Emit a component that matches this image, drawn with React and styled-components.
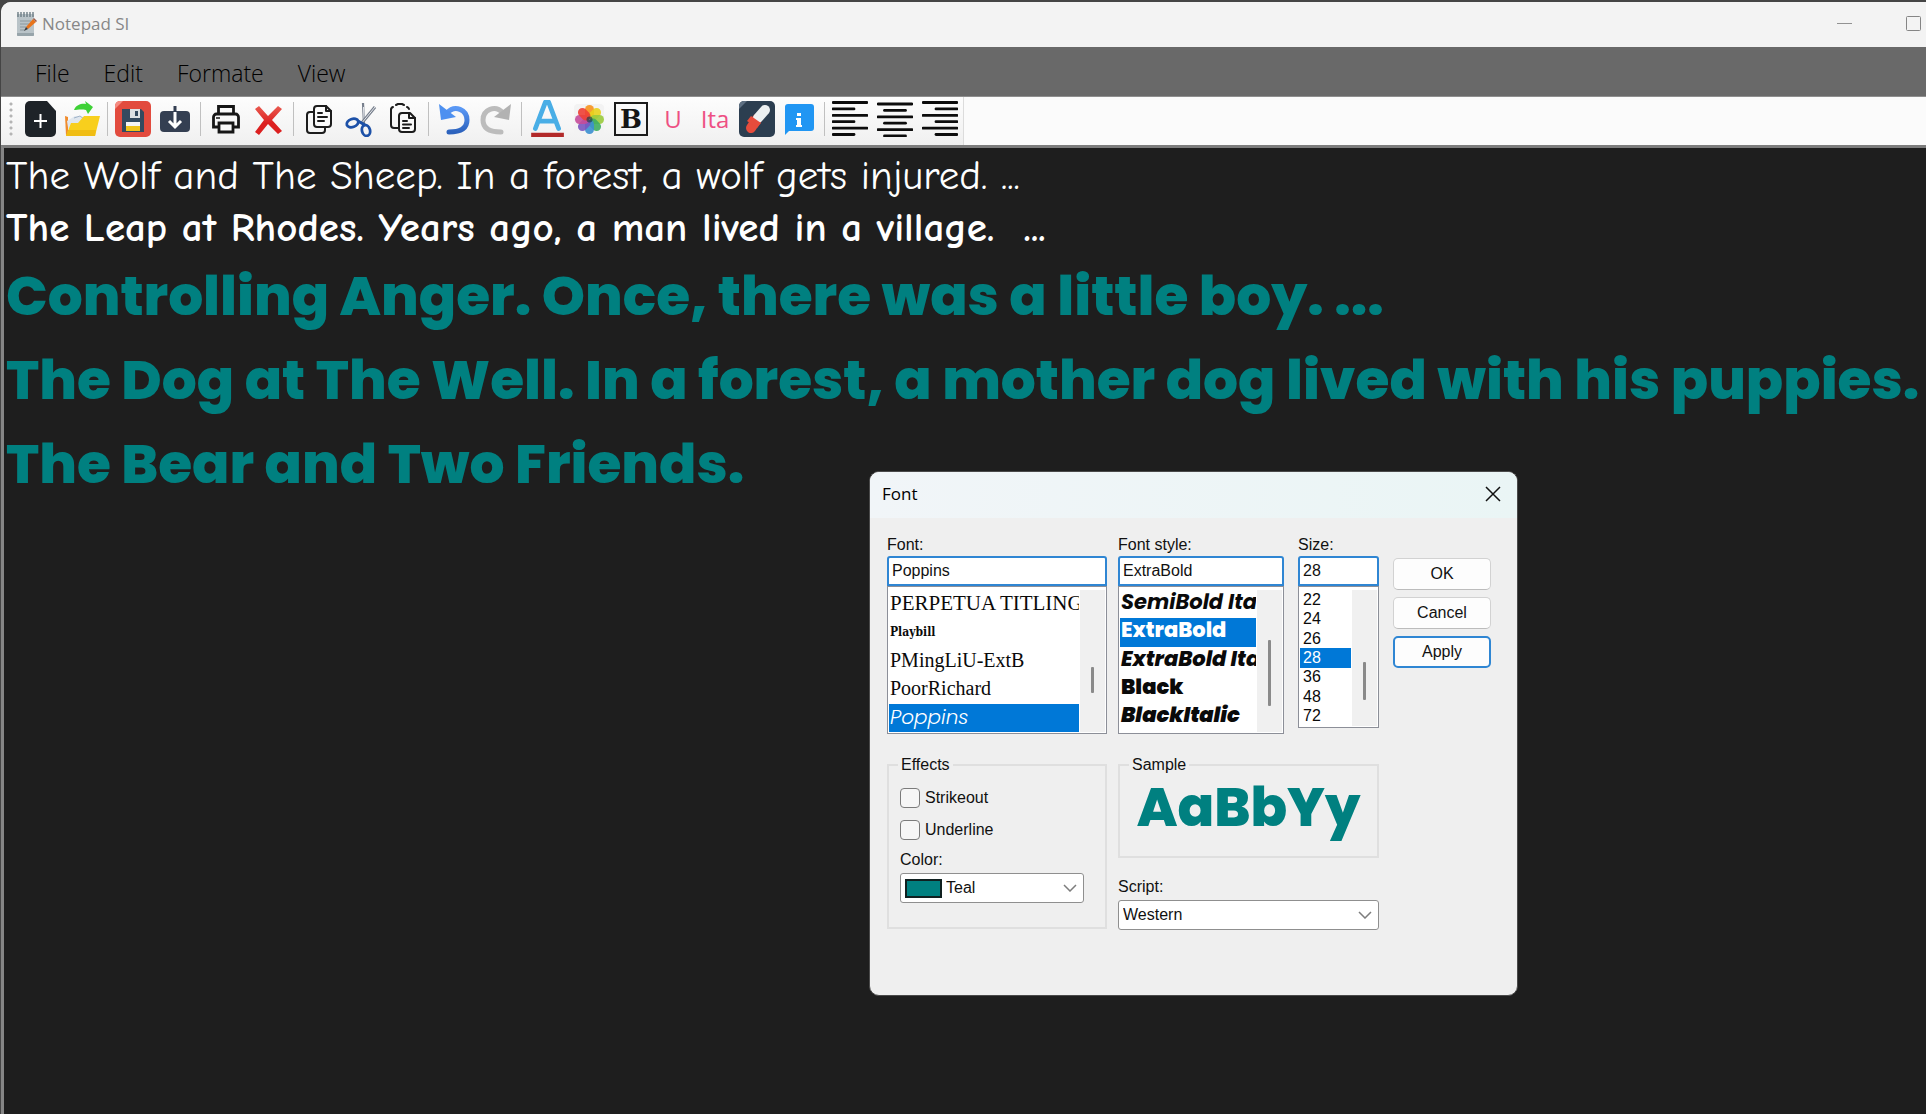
import React from "react";
import styled, { createGlobalStyle } from "styled-components";

const UI = `"Liberation Sans", Arial, sans-serif`;
const SYSTEM = `"Segoe UI", "Open Sans", "Noto Sans", sans-serif`;
const COMIC = `"Comic Sans MS", "Comic Neue", "Comic Relief", "Noto Sans", sans-serif`;
const POPPINS = `Poppins, Inter, sans-serif`;
const TEAL = "#008080";

const GlobalStyle = createGlobalStyle`
  *, *::before, *::after { box-sizing: border-box; }
  html { background: #454545; }
  body { margin: 0; font-family: ${UI}; overflow: hidden; }
  button, input, select { font: inherit; color: inherit; }
`;

/* ---------- main window ---------- */

const Desktop = styled.div`
  min-height: 100vh;
  display: flex;
  padding: 2px 0 0 1px;
  background: #454545;
`;

const Window = styled.main`
  flex: 1;
  min-width: 0;
  display: flex;
  flex-direction: column;
  border-top-left-radius: 10px;
  overflow: hidden;
  background: #f3f3f3;
`;

const TitleBar = styled.header`
  height: 45px;
  display: flex;
  align-items: center;
  gap: 5px;
  padding: 0 5px 2px 15px;
  background: #f3f3f3;
`;

const AppName = styled.h1`
  flex: 1;
  margin: 0;
  font: 400 17px/24px ${SYSTEM};
  color: #878787;
`;

const CaptionButtons = styled.div`
  display: flex;
  gap: 54px;
`;

const PlainButton = styled.button`
  display: flex;
  padding: 0;
  border: 0;
  background: none;
`;

const MenuBar = styled.nav`
  height: 50px;
  display: flex;
  align-items: center;
  gap: 34px;
  padding: 3px 34px 0;
  background: #696969;
  border-bottom: 1px solid #8e8e8e;
`;

const MenuItem = styled.button`
  padding: 0;
  border: 0;
  background: none;
  font: 300 23px/30px ${SYSTEM};
  color: #000;
`;

const ToolArea = styled.div`
  display: flex;
  height: 48px;
  background: #fbfbfb;
`;

const ToolBar = styled.div`
  display: flex;
  align-items: center;
  padding: 0 2px 5px 8px;
  background: linear-gradient(#fdfdfd, #f0f0f0);
  border-right: 1px solid #dcdcdc;
`;

const Grip = styled.span`
  width: 4px;
  height: 36px;
  margin-right: 6px;
  background: radial-gradient(circle, #b4b4b4 1px, transparent 2px) 0 0 / 4px 6px;
`;

const Divider = styled.span`
  width: 1px;
  height: 34px;
  margin: 0 4px;
  background: #c0c0c0;
`;

const Tool = styled.button`
  width: 42px;
  height: 42px;
  display: grid;
  place-items: center;
  padding: 0;
  border: 0;
  background: none;
`;

const AlignGroup = styled.div`
  display: flex;
  gap: 3px;
`;

const ToolText = styled.span`
  font: 400 24px/30px ${SYSTEM};
  color: #ee4f83;
`;

const Editor = styled.section`
  flex: 1;
  border-top: 3px solid #7d7d7d;
  border-left: 3px solid #868686;
  padding: 2px 0 0 2px;
  background: #1e1e1e;
  overflow: hidden;
`;

const Line = styled.p`
  margin: 0;
  white-space: pre;
  font-family: ${(p) => p.$family};
  font-size: ${(p) => p.$size}px;
  font-weight: ${(p) => p.$weight};
  line-height: ${(p) => p.$height}px;
  color: ${(p) => p.$color};
`;

/* ---------- font dialog ---------- */

const Dialog = styled.section`
  position: absolute;
  top: 471px;
  left: 869px;
  width: 649px;
  height: 525px;
  border: 1px solid #4a4a4a;
  border-radius: 10px;
  overflow: hidden;
  background: #efefef;
  color: #111;
  font-size: 16px;
  line-height: 20px;
`;

const DialogTitle = styled.header`
  height: 46px;
  display: flex;
  align-items: center;
  justify-content: space-between;
  padding: 0 16px 2px 12px;
  background: linear-gradient(90deg, #f1f5f8, #eaf5f5);
`;

const DialogName = styled.h2`
  margin: 0;
  font: 400 17px/24px ${SYSTEM};
  color: #000;
`;

const DialogBody = styled.div`
  display: grid;
  grid-template-columns: 220px 166px 84px 101px;
  column-gap: 11px;
  padding: 16px 17px;
`;

const Picker = styled.div`
  display: flex;
  flex-direction: column;
  padding-left: ${(p) => p.$inset || 0}px;
`;

const FieldLabel = styled.label`
  height: ${(p) => p.$height || 22}px;
  padding-top: 1px;
`;

const TextBox = styled.input`
  width: 100%;
  height: 30px;
  padding: 0 3px;
  border: 2px solid #2f86d3;
  border-radius: 3px 3px 0 0;
  background: #fff;
  outline: 0;
`;

const ListFrame = styled.div`
  height: ${(p) => p.$height}px;
  display: flex;
  gap: 1px;
  padding: 3px 1px 1px;
  border: 1px solid #8c8f98;
  background: #fff;
`;

const List = styled.ul`
  flex: 1;
  min-width: 0;
  display: flex;
  flex-direction: column;
  margin: 0;
  padding: 0;
  list-style: none;
  overflow: hidden;
`;

const Option = styled.li`
  flex: 1;
  min-height: 0;
  display: flex;
  align-items: center;
  padding: 0 0 ${(p) => p.$lift || 0}px ${(p) => p.$indent || 1}px;
  white-space: nowrap;
  overflow: hidden;
  font-family: ${(p) => p.$family || UI};
  font-size: ${(p) => p.$size || 16}px;
  font-weight: ${(p) => p.$weight || 400};
  font-style: ${(p) => (p.$italic ? "italic" : "normal")};
  color: ${(p) => (p["aria-selected"] ? "#fff" : "#0a0a0a")};
  background: ${(p) => (p["aria-selected"] ? "#0078d7" : "transparent")};
`;

const Scroll = styled.div`
  width: 25px;
  padding: ${(p) => p.$top}px 0 0 11px;
  background: #f0f0f0;

  &::before {
    content: "";
    display: block;
    width: 3px;
    height: ${(p) => p.$thumb}px;
    border-radius: 1px;
    background: #8a8a8a;
  }
`;

const Actions = styled.div`
  display: flex;
  flex-direction: column;
  gap: 7px;
  padding: 24px 0 0 3px;
`;

const Action = styled.button`
  height: 32px;
  padding: 0;
  border: ${(p) => (p.$primary ? "2px solid #2f86d3" : "1px solid #d2d2d2")};
  border-bottom-color: ${(p) => (p.$primary ? "#2f86d3" : "#bcbcbc")};
  border-radius: 5px;
  background: #fdfdfd;
`;

const LowerGrid = styled.div`
  display: grid;
  grid-template-columns: 220px 261px;
  column-gap: 11px;
  padding: 5px 17px;
`;

const Group = styled.fieldset`
  height: ${(p) => p.$height}px;
  min-width: 0;
  margin: 0;
  padding: 0 11px;
  border: 2px solid #dfdfdf;
`;

const Legend = styled.legend`
  height: 20px;
  padding: 0 3px;
  margin-left: -2px;
`;

const Check = styled.label`
  display: flex;
  align-items: center;
  gap: 5px;
  height: 32px;

  input {
    appearance: none;
    width: 20px;
    height: 20px;
    margin: 0;
    border: 1px solid #7b7b7b;
    border-radius: 4px;
    background: #f6f6f6;
  }
`;

const EffectRows = styled.div`
  display: grid;
  padding-top: 7px;
`;

const ColorField = styled(Picker)`
  padding-top: 3px;
`;

const SelectBox = styled.div`
  width: ${(p) => p.$width};
  height: 30px;
  display: flex;
  align-items: center;
  gap: 4px;
  padding: 0 6px 0 4px;
  border: 1px solid #8f8f8f;
  border-radius: 3px;
  background: #fff;

  select {
    flex: 1;
    min-width: 0;
    padding: 0;
    border: 0;
    appearance: none;
    background: none;
    outline: 0;
  }
`;

const Swatch = styled.span`
  width: 37px;
  height: 19px;
  border: 2px solid #102020;
  background: ${TEAL};
`;

const Sample = styled.div`
  padding-top: 4px;
  text-align: center;
  white-space: nowrap;
  font: 800 54px/56px ${POPPINS};
  color: ${TEAL};
`;

const ScriptField = styled.div`
  display: flex;
  flex-direction: column;
  padding-top: 18px;
`;

/* ---------- drawings ---------- */

const Icon = ({ children, size = 36 }) => (
  <svg width={size} height={size} viewBox="0 0 36 36" fill="none" aria-hidden="true">
    {children}
  </svg>
);

const NotepadIcon = () => (
  <svg width="21" height="26" viewBox="0 0 21 26" aria-hidden="true">
    <rect x="1" y="3" width="17" height="22" rx="1" fill="#b9c3c8" />
    <path d="M1 22h17v2a1 1 0 0 1-1 1H2a1 1 0 0 1-1-1z" fill="#97a4aa" />
    <path d="M2 1v5M5 1v5M8 1v5M11 1v5M14 1v5M17 1v5" stroke="#6c7b83" strokeWidth="1.4" />
    <path d="M4 10h11M4 13h9M4 16h6M4 19h5" stroke="#8b989e" />
    <path d="M10 16l7-8 3 3-8 7z" fill="#e8741c" />
    <path d="M17 8l1-1 3 3-1 1z" fill="#9b5a4a" />
    <path d="M10 16l2 2-4 2z" fill="#3a3a3a" />
  </svg>
);

const NewIcon = () => (
  <Icon>
    <path d="M8 0h17l9 10v21a5 5 0 0 1-5 5H8a5 5 0 0 1-5-5V5a5 5 0 0 1 5-5z" fill="#1e2328" />
    <path d="M18.500 13v14M12 20h13" stroke="#fff" strokeWidth="2" />
  </Icon>
);

const OpenIcon = () => (
  <Icon>
    <path d="M1 15l3 1v18H2z" fill="#f08b2c" />
    <path d="M3 20l8-5 8 1 6 3-4 8-16 6z" fill="#dfe6ee" />
    <path d="M10 17l6-2 4 3" stroke="#9fb2c8" />
    <path d="M7 22h7l6-7h16l-5 20H2z" fill="#f8cf1d" />
    <path d="M4 29L2 35h29l1-6z" fill="#f0bd14" />
    <path d="M10 9c2-6 9-7 12-6l-1-3 8 6-5 7-2-4c-5-1-9 0-12 0z" fill="#3ed136" />
  </Icon>
);

const SaveIcon = () => (
  <Icon>
    <rect width="36" height="36" rx="5" fill="#e24b3e" />
    <path d="M0 8L8 0H5a5 5 0 0 0-5 5z" fill="#f58c82" />
    <path d="M7 8h19l3 3v20H7z" fill="#334a5f" />
    <path d="M15 8h10v9H15z" fill="#dce1e4" />
    <path d="M20 10h3v5h-3z" fill="#334a5f" />
    <path d="M11 21h14v9H11z" fill="#f4f4f4" />
    <path d="M11 25h14v5H11z" fill="#f0c419" />
  </Icon>
);

const DownloadIcon = () => (
  <Icon>
    <rect x="3" y="10" width="30" height="21" rx="4" fill="#343f52" />
    <path d="M16.500 5h3v6h-3z" fill="#343f52" />
    <path d="M18 11v14M12 20l6 6 6-6" stroke="#fff" strokeWidth="3" />
  </Icon>
);

const PrinterIcon = () => (
  <Icon>
    <g stroke="#161616" strokeWidth="2.800" strokeLinejoin="miter">
      <path d="M10.500 13V5.500h15V13" />
      <path d="M11 26H5.500V16a3 3 0 0 1 3-3h19a3 3 0 0 1 3 3v10H25" />
      <path d="M11 22h14v9H11z" fill="#fafafa" />
    </g>
    <path d="M8 17h4" stroke="#161616" strokeWidth="1.500" />
  </Icon>
);

const DeleteIcon = () => (
  <Icon>
    <defs>
      <linearGradient id="cross" x1="0" y1="0" x2="0" y2="1">
        <stop stopColor="#ea5a50" />
        <stop offset="0.600" stopColor="#dc2020" />
      </linearGradient>
    </defs>
    <path d="M5 8l4-3 9 10L28 5l4 3-10 11 10 11-4 3-10-10-9 11-4-3 9-12z" fill="url(#cross)" />
  </Icon>
);

const CopyIcon = () => (
  <Icon>
    <g stroke="#1c1c1c" strokeWidth="2" strokeLinejoin="round" strokeLinecap="round">
      <path d="M12 11H9a3 3 0 0 0-3 3v15a3 3 0 0 0 3 3h12a3 3 0 0 0 3-3v-3" />
      <path d="M16 5h9l5 5v13a3 3 0 0 1-3 3H16a3 3 0 0 1-3-3V8a3 3 0 0 1 3-3z" fill="#fafafa" />
      <path d="M25 5v5h5M17 12h4M17 16h9M17 20h6" />
    </g>
  </Icon>
);

const CutIcon = () => (
  <Icon>
    <path d="M20 2l1 21" stroke="#777f8c" strokeWidth="2.200" />
    <path d="M20.500 6l.5 12" stroke="#e7e9ee" />
    <path d="M32 6L18 23" stroke="#777f8c" strokeWidth="3" />
    <path d="M32 6L18 23" stroke="#e7e9ee" />
    <ellipse cx="9.500" cy="22" rx="6" ry="4" transform="rotate(-20 9.500 22)" stroke="#1d51a8" strokeWidth="2.800" />
    <ellipse cx="23" cy="29.500" rx="4" ry="5.500" transform="rotate(-15 23 29.500)" stroke="#1d51a8" strokeWidth="2.800" />
    <path d="M15 20l7 4" stroke="#1d51a8" strokeWidth="3" />
  </Icon>
);

const PasteIcon = () => (
  <Icon>
    <g stroke="#1c1c1c" strokeWidth="2" strokeLinejoin="round" strokeLinecap="round">
      <path d="M13 27H9a3 3 0 0 1-3-3V9a3 3 0 0 1 2-3" />
      <path d="M11 4l2-1h4l2 1M22 6a3 3 0 0 1 2 2" />
      <path d="M17 12h8l5 5v11a3 3 0 0 1-3 3H17a3 3 0 0 1-3-3V15a3 3 0 0 1 3-3z" fill="#fafafa" />
      <path d="M24 12v5h6M18 20h4M18 23.500h8M18 27h6" />
    </g>
  </Icon>
);

const UndoIcon = () => (
  <Icon>
    <defs>
      <linearGradient id="undo" x1="0" y1="0" x2="0" y2="1">
        <stop stopColor="#5a98f5" />
        <stop offset="1" stopColor="#2c62bd" />
      </linearGradient>
    </defs>
    <path d="M11 12c8-9 20-3 20 7 0 8-6 12-18 12" stroke="url(#undo)" strokeWidth="5" strokeLinecap="round" />
    <path d="M3 3l2 16 15-3z" fill="#4d90f0" />
  </Icon>
);

const RedoIcon = () => (
  <Icon>
    <path d="M25 12C17 3 5 9 5 19c0 8 6 12 18 12" stroke="#bcbcbc" strokeWidth="5" strokeLinecap="round" />
    <path d="M33 3l-2 16-15-3z" fill="#b2b2b2" />
  </Icon>
);

const ColorIcon = () => (
  <Icon size={38}>
    <path d="M7 27L16.500 2h3L29 27M11 20h14" stroke="#49aee6" strokeWidth="4.500" strokeLinejoin="round" strokeLinecap="round" />
    <path d="M3 31h31v4H3z" fill="#b22a2a" />
  </Icon>
);

const PETALS = ["#f7941d", "#e8d21d", "#9acb3c", "#3fae62", "#3b8fd0", "#7a55c0", "#c54b9a", "#ee4035"];

const FlowerIcon = () => (
  <Icon>
    <rect x="3" y="3" width="30" height="31" rx="4" fill="#f3f3f3" />
    {PETALS.map((color, i) => (
      <rect
        key={color}
        x="14"
        y="4"
        width="9"
        height="14"
        rx="4.500"
        fill={color}
        opacity="0.900"
        transform={`rotate(${i * 45} 18.500 18.500)`}
      />
    ))}
    <circle cx="18.500" cy="18.500" r="3" fill="#23404a" opacity="0.700" />
  </Icon>
);

const BoldFrame = styled.span`
  width: 34px;
  height: 34px;
  display: grid;
  place-items: center;
  border: 2px solid #1b1b1b;
  font: 700 26px/30px "DejaVu Serif", "Liberation Serif", serif;
  color: #151515;
`;

const PillIcon = () => (
  <Icon>
    <rect width="36" height="36" rx="5" fill="#2c3e50" />
    <path d="M0 8L8 0H5a5 5 0 0 0-5 5z" fill="#5d6f82" />
    <path d="M12 27L18 18" stroke="#e74c3c" strokeWidth="10" strokeLinecap="round" />
    <path d="M19 17l7-8" stroke="#ecf0f1" strokeWidth="10" strokeLinecap="round" />
    <path d="M12 15l10 7-4 5-10-7z" fill="#e74c3c" />
  </Icon>
);

const InfoIcon = () => (
  <Icon>
    <path d="M6 3h24a3 3 0 0 1 3 3v21a3 3 0 0 1-3 3H8l-4 4V6a3 3 0 0 1 3-3z" fill="#2196f3" />
    <path d="M16 12h4v3h-4zM15 17h5v7h1v2h-6v-2h1v-5h-1z" fill="#fff" />
  </Icon>
);

const AlignIcon = ({ mode }) => (
  <Icon>
    {[0, 1, 2, 3, 4, 5].map((i) => {
      const width = i % 2 ? 21 : 34;
      const x = mode === "left" ? 1 : mode === "right" ? 35 - width : 18 - width / 2;
      const y = (mode === "center" ? 3 : 1.5) + i * 6.4;
      return <path key={i} d={`M${x} ${y}h${width}`} stroke="#0d0d0d" strokeWidth="2.800" strokeLinecap="round" />;
    })}
  </Icon>
);

const Chevron = () => (
  <svg width="14" height="8" viewBox="0 0 14 8" fill="none" aria-hidden="true">
    <path d="M1 1l6 6 6-6" stroke="#7d7d7d" strokeWidth="1.500" />
  </svg>
);

/* ---------- data ---------- */

const WRITING = [
  { text: "The Wolf and The Sheep. In a forest, a wolf gets injured. ...", $family: COMIC, $size: 41, $weight: 400, $height: 52, $color: "#fff" },
  { text: "The Leap at Rhodes. Years ago, a man lived in a village.  ...", $family: COMIC, $size: 41, $weight: 700, $height: 52, $color: "#fff" },
  { text: "Controlling Anger. Once, there was a little boy. ...", $family: POPPINS, $size: 55, $weight: 800, $height: 84, $color: TEAL },
  { text: "The Dog at The Well. In a forest, a mother dog lived with his puppies.", $family: POPPINS, $size: 55, $weight: 800, $height: 84, $color: TEAL },
  { text: "The Bear and Two Friends.", $family: POPPINS, $size: 55, $weight: 800, $height: 84, $color: TEAL },
];

const SERIF = `"Liberation Serif", "Times New Roman", serif`;

const FONTS = [
  { name: "PERPETUA TITLING", $family: SERIF, $size: 21 },
  { name: "Playbill", $family: `"DejaVu Serif Condensed", "DejaVu Serif", serif`, $size: 12, $weight: 700 },
  { name: "PMingLiU-ExtB", $family: SERIF, $size: 20 },
  { name: "PoorRichard", $family: SERIF, $size: 20 },
  { name: "Poppins", $family: POPPINS, $size: 20, $weight: 300, $italic: true },
];

const STYLES = [
  { name: "SemiBold Italic", $weight: 700, $italic: true },
  { name: "ExtraBold", $weight: 800 },
  { name: "ExtraBold Italic", $weight: 800, $italic: true },
  { name: "Black", $weight: 900 },
  { name: "BlackItalic", $weight: 900, $italic: true },
];

const SIZES = ["22", "24", "26", "28", "36", "48", "72"];

const TOOLS = [
  [["New", <NewIcon />], ["Open", <OpenIcon />]],
  [["Save", <SaveIcon />], ["Save as", <DownloadIcon />]],
  [["Print", <PrinterIcon />], ["Delete", <DeleteIcon />]],
  [["Copy", <CopyIcon />], ["Cut", <CutIcon />], ["Paste", <PasteIcon />]],
  [["Undo", <UndoIcon />], ["Redo", <RedoIcon />]],
  [
    ["Font colour", <ColorIcon />],
    ["Background colour", <FlowerIcon />],
    ["Bold", <BoldFrame>B</BoldFrame>],
    ["Underline", <ToolText>U</ToolText>],
    ["Italic", <ToolText>Ita</ToolText>],
    ["Clear", <PillIcon />],
    ["About", <InfoIcon />],
  ],
];

function FontDialog() {
  return (
    <Dialog role="dialog" aria-labelledby="font-title">
      <DialogTitle>
        <DialogName id="font-title">Font</DialogName>
        <PlainButton aria-label="Close">
          <svg width="16" height="16" viewBox="0 0 16 16" aria-hidden="true">
            <path d="M1 1l14 14M15 1L1 15" stroke="#111" strokeWidth="1.500" />
          </svg>
        </PlainButton>
      </DialogTitle>

      <DialogBody>
        <Picker>
          <FieldLabel htmlFor="font">Font:</FieldLabel>
          <TextBox id="font" defaultValue="Poppins" />
          <ListFrame $height={148}>
            <List role="listbox" aria-label="Font">
              {FONTS.map(({ name, ...look }) => (
                <Option key={name} role="option" aria-selected={name === "Poppins"} $lift={2} {...look}>{name}</Option>
              ))}
            </List>
            <Scroll $top={77} $thumb={26} />
          </ListFrame>
        </Picker>

        <Picker>
          <FieldLabel htmlFor="style">Font style:</FieldLabel>
          <TextBox id="style" defaultValue="ExtraBold" />
          <ListFrame $height={148}>
            <List role="listbox" aria-label="Font style">
              {STYLES.map(({ name, ...look }) => (
                <Option key={name} role="option" aria-selected={name === "ExtraBold"} $family={POPPINS} $size={21} $lift={5} {...look}>{name}</Option>
              ))}
            </List>
            <Scroll $top={50} $thumb={66} />
          </ListFrame>
        </Picker>

        <Picker $inset={3}>
          <FieldLabel htmlFor="size">Size:</FieldLabel>
          <TextBox id="size" defaultValue="28" />
          <ListFrame $height={142}>
            <List role="listbox" aria-label="Size">
              {SIZES.map((size) => (
                <Option key={size} role="option" aria-selected={size === "28"} $indent={3}>{size}</Option>
              ))}
            </List>
            <Scroll $top={72} $thumb={38} />
          </ListFrame>
        </Picker>

        <Actions>
          <Action>OK</Action>
          <Action>Cancel</Action>
          <Action $primary>Apply</Action>
        </Actions>
      </DialogBody>

      <LowerGrid>
        <Group $height={174}>
          <Legend>Effects</Legend>
          <EffectRows>
            <Check><input type="checkbox" />Strikeout</Check>
            <Check><input type="checkbox" />Underline</Check>
            <ColorField>
              <FieldLabel htmlFor="color" $height={24}>Color:</FieldLabel>
              <SelectBox $width="184px">
                <Swatch />
                <select id="color" defaultValue="Teal"><option>Teal</option></select>
                <Chevron />
              </SelectBox>
            </ColorField>
          </EffectRows>
        </Group>
        <div>
          <Group $height={103}>
            <Legend>Sample</Legend>
            <Sample>AaBbYy</Sample>
          </Group>
          <ScriptField>
            <FieldLabel htmlFor="script" $height={24}>Script:</FieldLabel>
            <SelectBox $width="100%">
              <select id="script" defaultValue="Western"><option>Western</option></select>
              <Chevron />
            </SelectBox>
          </ScriptField>
        </div>
      </LowerGrid>
    </Dialog>
  );
}

export default function App() {
  return (
    <Desktop>
      <GlobalStyle />
      <Window>
        <TitleBar>
          <NotepadIcon />
          <AppName>Notepad SI</AppName>
          <CaptionButtons>
            <PlainButton aria-label="Minimize">
              <svg width="15" height="15" viewBox="0 0 15 15" aria-hidden="true"><path d="M0 7.500h15" stroke="#929292" /></svg>
            </PlainButton>
            <PlainButton aria-label="Maximize">
              <svg width="15" height="15" viewBox="0 0 15 15" fill="none" aria-hidden="true">
                <rect x="0.500" y="0.500" width="14" height="14" rx="1" stroke="#858585" />
              </svg>
            </PlainButton>
          </CaptionButtons>
        </TitleBar>

        <MenuBar>
          {["File", "Edit", "Formate", "View"].map((name) => <MenuItem key={name}>{name}</MenuItem>)}
        </MenuBar>

        <ToolArea>
          <ToolBar role="toolbar" aria-label="Tools">
            <Grip />
            {TOOLS.map((group, i) => (
              <React.Fragment key={i}>
                {group.map(([name, icon]) => <Tool key={name} aria-label={name}>{icon}</Tool>)}
                <Divider />
              </React.Fragment>
            ))}
            <AlignGroup>
              {["left", "center", "right"].map((mode) => (
                <Tool key={mode} aria-label={`Align ${mode}`}><AlignIcon mode={mode} /></Tool>
              ))}
            </AlignGroup>
          </ToolBar>
        </ToolArea>

        <Editor aria-label="Document">
          {WRITING.map(({ text, ...look }) => <Line key={text} {...look}>{text}</Line>)}
        </Editor>
      </Window>
      <FontDialog />
    </Desktop>
  );
}
